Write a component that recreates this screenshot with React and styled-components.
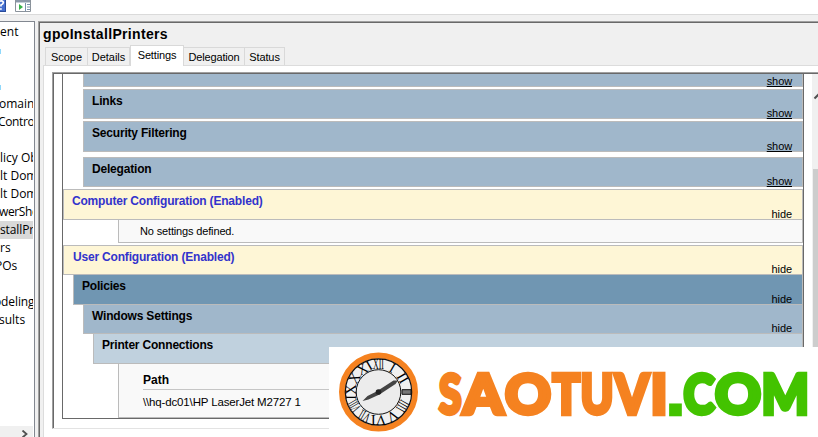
import React from "react";
import styled, { createGlobalStyle } from "styled-components";

const GlobalStyle = createGlobalStyle`
  * { box-sizing: border-box; }
  body {
    margin: 0;
    overflow: hidden;
    background: #f0f0f0;
    color: #000;
    font-family: "Liberation Sans", Arial, sans-serif;
  }
`;

const Window = styled.div`
  position: relative;
  width: 818px;
  height: 437px;
  overflow: hidden;
  display: flex;
  flex-direction: column;
`;

const Toolbar = styled.header`
  height: 15px;
  flex: none;
  display: flex;
  gap: 9px;
  background: #fff;
  border-bottom: 1px solid #dadada;
`;

const ToolIcon = styled.svg`
  display: block;
  flex: none;
`;

const Workspace = styled.div`
  flex: 1;
  min-height: 0;
  padding-top: 6px;
  display: flex;
  gap: 3px;
`;

const Tree = styled.nav`
  width: 35px;
  flex: none;
  display: flex;
  flex-direction: column;
  justify-content: space-between;
  overflow: hidden;
  background: #fff;
  border-top: 1px solid #828790;
  border-right: 1px solid #828790;
`;

const TreeList = styled.div`
  width: 33px;
  padding-top: 1px;
  overflow: hidden;
`;

const TreeRow = styled.div`
  height: 18px;
  display: flow-root;
  text-indent: ${(p) => p.$shift || 0}px;
  font: 12px/18px "Open Sans", "Noto Sans", sans-serif;
  letter-spacing: ${(p) => p.$track || 0}px;
  white-space: nowrap;
  background: ${(p) => (p.$selected ? "#d9d9d9" : "transparent")};
`;

const IconEdge = styled.span`
  display: block;
  width: 1px;
  height: 5px;
  margin-top: 8px;
  background: #8fd8fb;
`;

const TreeScroll = styled.div`
  width: 33px;
  height: 11px;
  flex: none;
  padding: 4px 0 0 21px;
  background: #f0f0f0;
`;

const Details = styled.main`
  flex: 1;
  min-width: 0;
  padding-left: 3px;
  display: flex;
  flex-direction: column;
  border-top: 1px solid #a0a0a0;
  border-left: 1px solid #a0a0a0;
  box-shadow: inset 1px 1px #696969;
`;

const Title = styled.h1`
  height: 22px;
  margin: 0;
  padding: 3px 0 0 1px;
  font-size: 14px;
  line-height: 18px;
  letter-spacing: 0.33px;
  flex: none;
`;

const Tabs = styled.div`
  height: 21px;
  flex: none;
  padding-left: 3px;
  display: flex;
  align-items: flex-end;
`;

const Tab = styled.div`
  width: ${(p) => p.$w}px;
  height: ${(p) => (p.$active ? 21 : 18)}px;
  margin-bottom: ${(p) => (p.$active ? -1 : 0)}px;
  position: relative;
  border: 1px solid #d9d9d9;
  border-bottom: 0;
  border-left-width: ${(p) => (p.$joined ? 0 : 1)}px;
  background: ${(p) => (p.$active ? "#fff" : "#f0f0f0")};
  font-size: 11px;
  line-height: ${(p) => (p.$active ? 19 : 18)}px;
  letter-spacing: ${(p) => p.$track || 0}px;
  text-align: center;
  white-space: nowrap;
`;

const Page = styled.section`
  flex: 1;
  min-height: 0;
  padding: 6px 0 8px 8px;
  background: #fff;
  border-top: 1px solid #dcdcdc;
  border-left: 1px solid #dcdcdc;
  margin-left: 1px;
`;

const Browser = styled.div`
  height: 357px;
  display: flex;
  border-top: 1px solid #a0a0a0;
  border-left: 1px solid #a0a0a0;
  border-bottom: 1px solid #e3e3e3;
  box-shadow: inset 1px 1px #696969;
  padding: 1px 0 0 9px;
`;

const Report = styled.div`
  width: 742px;
  height: 345px;
  flex: none;
  border: solid #696969;
  border-width: 0 1px 1px;
`;

const tones = {
  gold: "#fef6d6",
  deep: "#7096b2",
  mid: "#a0b7cb",
  light: "#c0d1de",
};

const Section = styled.div`
  height: ${(p) => p.$h}px;
  margin: 0 0 ${(p) => p.$gap || 0}px ${(p) => p.$level * 10}px;
  padding: 0 10px 0 ${(p) => p.$pad || 8}px;
  display: flex;
  justify-content: space-between;
  border: 1px solid #bbb;
  border-top-width: ${(p) => (p.$joined ? 0 : 1)}px;
  background: ${(p) => tones[p.$tone]};
  color: ${(p) => (p.$tone === "gold" ? "#3333cc" : "#000")};
`;

const SectionName = styled.h2`
  margin: 0;
  padding-top: 4px;
  font-size: 12px;
  line-height: 15px;
  letter-spacing: -0.19px;
  white-space: nowrap;
`;

const Toggle = styled.span`
  align-self: flex-end;
  margin-bottom: -2px;
  color: #000;
  font-size: 11px;
  line-height: 13px;
  letter-spacing: -0.1px;
  text-decoration: ${(p) => (p.$closed ? "underline" : "none")};
`;

const Body = styled.div`
  height: ${(p) => p.$h}px;
  margin: 0 0 ${(p) => p.$gap || 0}px 55px;
  padding: ${(p) => p.$pad};
  border: solid #bbb;
  border-width: 0 1px 1px;
  background: #f9f9f9;
  font-size: 11.5px;
  line-height: 14px;
`;

const Note = styled.p`
  margin: 0;
  font-size: 11px;
  letter-spacing: -0.15px;
`;

const PathHead = styled.div`
  height: 17px;
  border-bottom: 1px solid #c6c6c6;
  font-size: 12px;
  font-weight: bold;
`;

const PathValue = styled.div`
  padding-top: 5px;
  letter-spacing: -0.15px;
`;

const PageScroll = styled.div`
  flex: 1;
  margin-left: 8px;
  display: flex;
  flex-direction: column;
  justify-content: space-between;
  background: #f0f0f0;
`;

const Thumb = styled.div`
  height: 259px;
  margin-left: 1px;
  background: #cdcdcd;
`;

const Arrow = styled.svg`
  display: block;
  margin-top: ${(p) => p.$top || 0}px;
`;

const Watermark = styled.div`
  position: absolute;
  left: 329px;
  top: 347px;
  width: 489px;
  height: 90px;
  background: #fff;
`;

const treeRows = [
  { text: "ent", track: 0.1 },
  { edge: true },
  {},
  { edge: true },
  { text: "omain", shift: -1 },
  { text: "Contro", shift: -2, track: -0.35 },
  {},
  { text: "licy Ob" },
  { text: "lt Dom" },
  { text: "lt Dom" },
  { text: "werShe", shift: -1, track: -0.4 },
  { text: "stallPri", selected: true, track: -0.1 },
  { text: "rs" },
  { text: "POs", shift: -5 },
  {},
  { text: "odeling", shift: -6, track: -0.1 },
  { text: "sults", shift: -1 },
];

const tabs = [
  { name: "Scope", w: 43 },
  { name: "Details", w: 42, joined: true },
  { name: "Settings", w: 54, active: true, track: -0.15 },
  { name: "Delegation", w: 61, joined: true, track: -0.15 },
  { name: "Status", w: 40, joined: true, track: -0.1 },
];

const sections = [
  { h: 13, level: 2, tone: "mid", gap: 2, joined: true, closed: true },
  { name: "Links", h: 30, level: 2, tone: "mid", gap: 2, closed: true },
  { name: "Security Filtering", h: 31, level: 2, tone: "mid", gap: 5, closed: true },
  { name: "Delegation", h: 30, level: 2, tone: "mid", gap: 2, closed: true },
  { name: "Computer Configuration (Enabled)", h: 31, level: 0, tone: "gold" },
  { note: "No settings defined." },
  { name: "User Configuration (Enabled)", h: 30, level: 0, tone: "gold", pad: 9 },
  { name: "Policies", h: 30, level: 1, tone: "deep", joined: true },
  { name: "Windows Settings", h: 29, level: 2, tone: "mid", joined: true },
  { name: "Printer Connections", h: 30, level: 3, tone: "light", joined: true },
];

const numerals = ["XII", "I", "II", "", "IIII", "V", "VI", "VII", "VIII", "IX", "X", "XI"];

// Each glyph: character, left edge, advance width in the word mark.
const wordmark = [
  ["S", 439, 22.5], ["A", 463, 40.5], ["O", 505, 46], ["T", 552.5, 27.5],
  ["U", 580.5, 33], ["V", 615, 34], ["I", 650.5, 17], [".", 667.5, 16],
  ["C", 683.5, 31], ["O", 715, 46], ["M", 761.5, 47.5],
];

function Clock() {
  return (
    <g transform="translate(49.5 45)">
      <circle r="36.5" fill="#f0f0f0" stroke="#f58220" strokeWidth="6" />
      <circle r="33.2" fill="#f0f0f0" stroke="#111" strokeWidth="1.2" />
      <circle r="22.3" fill="#ececec" stroke="#111" strokeWidth="1" />
      {numerals.map((n, i) => (
        <text
          key={i}
          transform={`rotate(${i * 30}) translate(0 -23)`}
          textAnchor="middle"
          fontFamily="Liberation Serif, serif"
          fontSize="14.5"
          textLength={n.length > 2 ? 11 : undefined}
          lengthAdjust="spacingAndGlyphs"
        >
          {n}
        </text>
      ))}
      <path d="M23.5-2.3h9v4.6h-9z" fill="#777" stroke="#111" />
      <path d="M-16 9 -11 4 -2-.5 15-11.5 19.5-11.5 17-8 1 2.5-10 7.5Z" fill="#444" />
      <circle r="2.8" fill="#222" />
    </g>
  );
}

export default function App() {
  return (
    <Window>
      <GlobalStyle />
      <Toolbar>
        <ToolIcon width="6" height="12" viewBox="0 0 6 12">
          <path d="M0 0h6v12H0z" fill="#294b9a" />
          <path d="M0 0h5v11H0z" fill="#4670cf" />
          <path d="M0 1.2C4 0 4.5 3.5 1 5v1.5M0 9h1.8" fill="none" stroke="#fff" strokeWidth="1.7" />
        </ToolIcon>
        <ToolIcon width="16" height="12" viewBox="0 0 16 12">
          <path d="M.5-1h15v12.5H.5z" fill="#fff" stroke="#8a929b" />
          <path d="M1 0h14v2H1z" fill="#8b98a8" />
          <path d="M10.5 2v9M12 4.5h3M12 7h3M12 9.5h3" stroke="#7891ad" />
          <path d="M1 2.5h14" stroke="#c5ced8" />
          <path d="M4 4v6l4-3z" fill="#37b34a" />
        </ToolIcon>
      </Toolbar>
      <Workspace>
        <Tree>
          <TreeList>
            {treeRows.map((r, i) => (
              <TreeRow key={i} $shift={r.shift} $track={r.track} $selected={r.selected}>
                {r.edge ? <IconEdge /> : r.text}
              </TreeRow>
            ))}
          </TreeList>
          <TreeScroll>
            <Arrow width="8" height="8" viewBox="0 0 8 8">
              <path d="m1.5 .5 4 3.5-4 3.5" fill="none" stroke="#505050" strokeWidth="1.8" />
            </Arrow>
          </TreeScroll>
        </Tree>
        <Details>
          <Title>gpoInstallPrinters</Title>
          <Tabs>
            {tabs.map((t) => (
              <Tab key={t.name} $w={t.w} $active={t.active} $joined={t.joined} $track={t.track}>
                {t.name}
              </Tab>
            ))}
          </Tabs>
          <Page>
            <Browser>
              <Report>
                {sections.map((s, i) =>
                  s.note ? (
                    <Body key={i} $h={23} $gap={2} $pad="4px 0 0 21px">
                      <Note>{s.note}</Note>
                    </Body>
                  ) : (
                    <Section key={i} $h={s.h} $gap={s.gap} $level={s.level} $tone={s.tone} $pad={s.pad} $joined={s.joined}>
                      <SectionName>{s.name}</SectionName>
                      {s.tone !== "light" && (
                        <Toggle $closed={s.closed}>{s.closed ? "show" : "hide"}</Toggle>
                      )}
                    </Section>
                  )
                )}
                <Body $h={54} $pad="9px 20px 0 24px">
                  <PathHead>Path</PathHead>
                  <PathValue>{"\\\\hq-dc01\\HP LaserJet M2727 1"}</PathValue>
                </Body>
              </Report>
              <PageScroll>
                <Arrow width="6" height="9" viewBox="0 0 6 9" $top={17}>
                  <path d="m2.5 7.5 5-5" stroke="#505050" strokeWidth="2" />
                </Arrow>
                <Thumb />
              </PageScroll>
            </Browser>
          </Page>
        </Details>
      </Workspace>
      <Watermark>
        <svg width="489" height="90" viewBox="0 0 489 90">
          <Clock />
          <text y="67" fontFamily="Lato, sans-serif" fontWeight="900" fontSize="55.5" strokeWidth="4.4" strokeMiterlimit="3">
            {wordmark.map(([ch, x, w], i) => (
              <tspan
                key={i}
                x={x - 329}
                textLength={w}
                lengthAdjust="spacingAndGlyphs"
                fontFamily={ch === "." ? "Liberation Sans, sans-serif" : undefined}
                fill={i < 7 ? "#f58220" : "#43c300"}
                stroke={i < 7 ? "#f58220" : "#43c300"}
              >
                {ch}
              </tspan>
            ))}
          </text>
        </svg>
      </Watermark>
    </Window>
  );
}
